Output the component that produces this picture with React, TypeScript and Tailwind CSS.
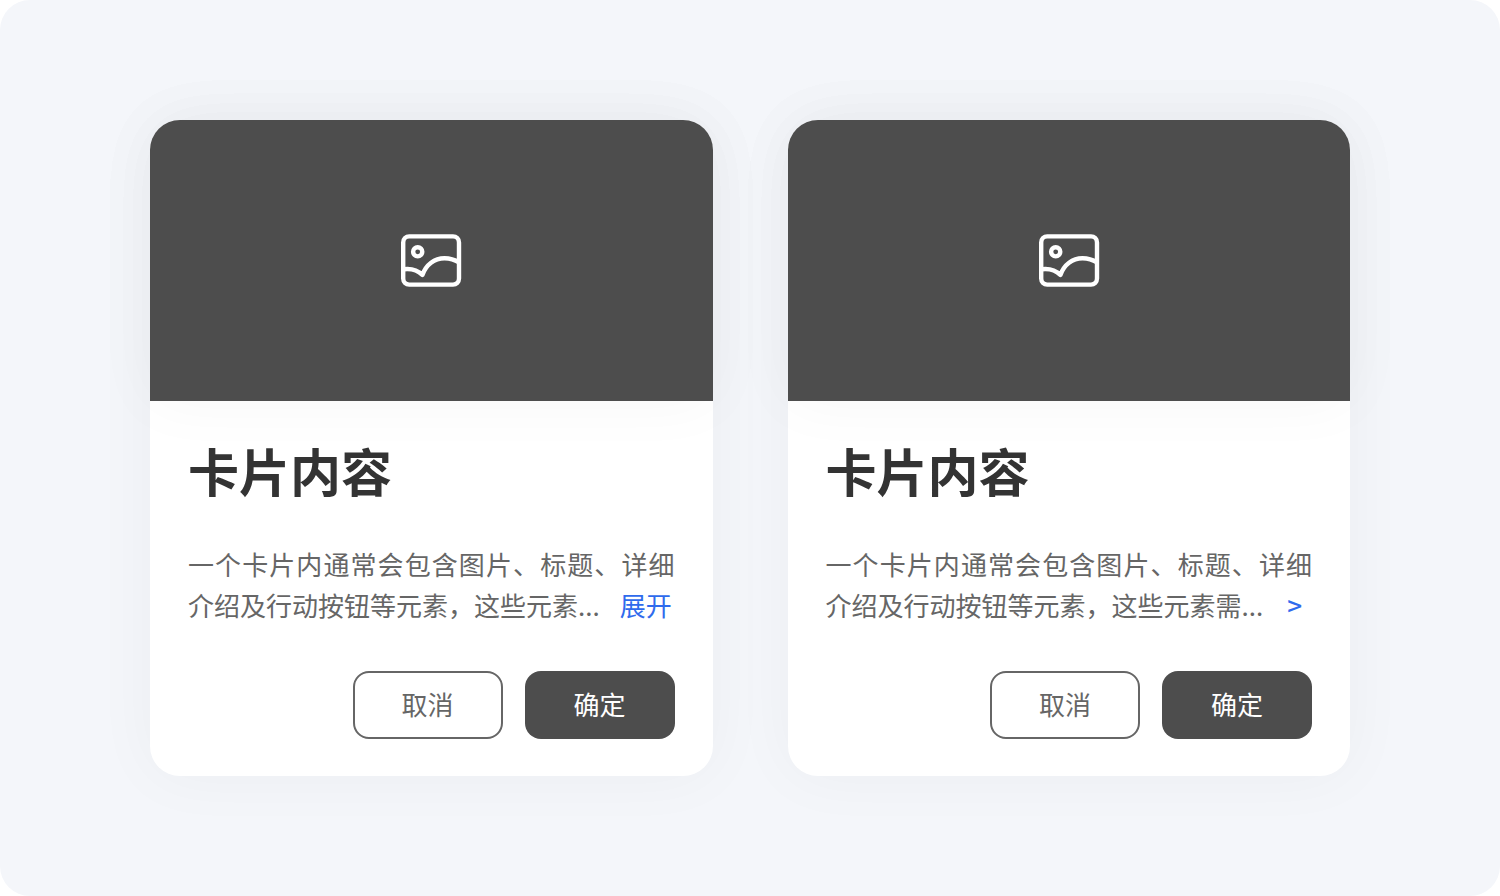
import React from 'react'

const cards = [
  { id: 'text', summary: '一个卡片内通常会包含图片、标题、详细介绍及行动按钮等元素，这些元素...', more: '展开' },
  { id: 'arrow', summary: '一个卡片内通常会包含图片、标题、详细介绍及行动按钮等元素，这些元素需...', more: '>' },
]

function PictureIcon() {
  return (
    <svg width="62" height="54" viewBox="0 0 62 54" fill="none" stroke="currentColor" strokeWidth="4.4" aria-hidden="true">
      <rect x="3.2" y="3.4" width="55.8" height="48.2" rx="6" />
      <circle cx="17.7" cy="18.8" r="4.6" />
      <path d="M3.5 36.2C11 35.200 17 36.500 22.400 42 C26 31.500 34.500 25.300 44.500 25.300c5.500 0 10 1.300 14.500 4.200" strokeLinejoin="round" />
    </svg>
  )
}

function Card({ summary, more }: { summary: string; more: string }) {
  return (
    <article className="rounded-[30px] bg-white shadow-[0_0_64px_rgba(0,0,0,0.04)]">
      <div className="flex aspect-[2/1] items-center justify-center rounded-t-[30px] bg-[#4d4d4d] pb-0.5 text-white shadow-[0_0_64px_rgba(0,0,0,0.04)]">
        <PictureIcon />
      </div>
      <div className="px-[38px] pt-[33px] pb-[37px]">
        <h2 className="text-[51px] leading-[72px] font-bold text-[#333]">卡片内容</h2>
        <p className="mt-[37px] text-justify text-[26px] leading-[41px] text-[#666]">
          {summary}
          <button
            type="button"
            className={more === '>' ? 'ml-6 font-medium text-[#2f6bed]' : 'ml-5 text-[#2f6bed]'}
          >
            {more}
          </button>
        </p>
        <div className="mt-[46px] flex justify-end gap-[22px] text-[26px]">
          <button type="button" className="h-[68px] w-[150px] rounded-2xl border-2 border-[#666] pb-1 text-[#666]">
            取消
          </button>
          <button type="button" className="h-[68px] w-[150px] rounded-2xl bg-[#4d4d4d] pb-1 text-white">
            确定
          </button>
        </div>
      </div>
    </article>
  )
}

export default function App() {
  return (
    <main
      lang="zh-CN"
      className="min-h-screen rounded-[30px] bg-[#f4f6fa] px-[10%] py-[120px] font-['Noto_Sans_CJK_SC',sans-serif]"
    >
      <div className="grid grid-cols-2 gap-[75px]">
        {cards.map((card) => (
          <Card key={card.id} summary={card.summary} more={card.more} />
        ))}
      </div>
    </main>
  )
}
